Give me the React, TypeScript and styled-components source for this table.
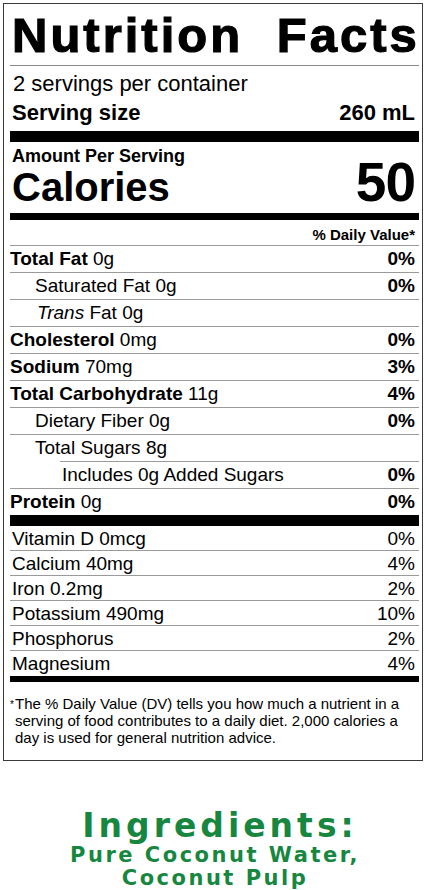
import React from 'react';
import styled, { createGlobalStyle } from 'styled-components';

const Global = createGlobalStyle`
  html, body { margin: 0; padding: 0; background: #fff; }
  body { font-family: "Liberation Sans", Arial, Helvetica, sans-serif; color: #000; }
`;

const Page = styled.div`
  width: 427px;
  padding: 3px 0 0 3px;
  box-sizing: border-box;
`;

const Panel = styled.section`
  width: 420px;
  box-sizing: border-box;
  border: 1px solid #3a3a3a;
  padding: 0 3px 2px 6px;
`;

const Title = styled.h1`
  margin: 0;
  padding: 7px 0 6px 2px;
  font-size: 49px;
  line-height: 48px;
  font-weight: 700;
  letter-spacing: 3px;
  word-spacing: 17px;
  -webkit-text-stroke: 1.2px #000;
  white-space: nowrap;
  border-bottom: 1px solid #8a8a8a;
`;

const Servings = styled.div`
  padding: 5px 0 0 3px;
  font-size: 22px;
  line-height: 26px;
`;

const ServingSize = styled.div`
  display: flex;
  justify-content: space-between;
  margin-top: 3px;
  padding: 0 4px 0 2px;
  font-size: 22px;
  line-height: 26px;
  font-weight: 700;
`;

const Bar = styled.div<{ $h: number; $gap?: number }>`
  height: ${(p) => p.$h}px;
  margin-top: ${(p) => p.$gap ?? 0}px;
  background: #000;
`;

const CaloriesBlock = styled.div`
  display: flex;
  justify-content: space-between;
  align-items: last baseline;
  padding: 3px 4px 0 2px;
`;

const CaloriesLeft = styled.div`
  display: flex;
  flex-direction: column;
`;

const AmountLabel = styled.div`
  font-size: 18px;
  line-height: 22px;
  font-weight: 700;
`;

const CaloriesLabel = styled.div`
  font-size: 40px;
  line-height: 40px;
  font-weight: 700;
`;

const CaloriesValue = styled.div`
  font-size: 55px;
  line-height: 48px;
  font-weight: 700;
  letter-spacing: -1px;
`;

const DailyHeader = styled.div`
  padding: 5px 4px 0 0;
  text-align: right;
  font-size: 15px;
  line-height: 20px;
  font-weight: 700;
  border-bottom: 1px solid #9a9a9a;
`;

const NutrientRow = styled.div<{ $indent: number; $lineInset: number; $last?: boolean }>`
  display: flex;
  justify-content: space-between;
  height: ${(p) => (p.$last ? 26 : 27)}px;
  box-sizing: border-box;
  padding: 0 4px 0 ${(p) => p.$indent}px;
  font-size: 19px;
  line-height: 26px;
  white-space: nowrap;
  background: ${(p) =>
    p.$last ? 'none' : `linear-gradient(#9a9a9a, #9a9a9a) no-repeat right bottom / calc(100% - ${p.$lineInset}px) 1px`};
`;

const Pct = styled.span`
  font-weight: 700;
`;

const VitaminRow = styled.div<{ $last?: boolean }>`
  display: flex;
  justify-content: space-between;
  height: 25px;
  box-sizing: border-box;
  padding: 0 4px 0 2px;
  font-size: 19px;
  line-height: 25px;
  border-bottom: ${(p) => (p.$last ? 'none' : '1px solid #9a9a9a')};
`;

const Footnote = styled.div`
  display: flex;
  padding: 13px 4px 12px 0;
  font-size: 15px;
  line-height: 17px;
`;

const Asterisk = styled.span`
  flex: none;
  width: 5px;
  font-size: 10px;
  line-height: 20px;
`;

const FootText = styled.p`
  margin: 0;
`;

const Ingredients = styled.div`
  margin-top: 46px;
  text-align: center;
  color: #17873f;
  font-family: "DejaVu Sans", Verdana, sans-serif;
  font-weight: 700;
`;

const IngredientsTitle = styled.div`
  padding-left: 10px;
  font-size: 33px;
  line-height: 37px;
  letter-spacing: 4px;
`;

const IngredientsList = styled.div`
  font-size: 21px;
  line-height: 23px;
  letter-spacing: 2.5px;
`;

type Nutrient = {
  name: React.ReactNode;
  amount: string;
  pct?: string;
  indent: number;
  lineInset?: number;
};

const nutrients: Nutrient[] = [
  { name: <b>Total Fat</b>, amount: '0g', pct: '0%', indent: 0 },
  { name: 'Saturated Fat', amount: '0g', pct: '0%', indent: 25 },
  { name: <><i>Trans</i> Fat</>, amount: '0g', indent: 27 },
  { name: <b>Cholesterol</b>, amount: '0mg', pct: '0%', indent: 0 },
  { name: <b>Sodium</b>, amount: '70mg', pct: '3%', indent: 0 },
  { name: <b>Total Carbohydrate</b>, amount: '11g', pct: '4%', indent: 0 },
  { name: 'Dietary Fiber', amount: '0g', pct: '0%', indent: 25 },
  { name: 'Total Sugars', amount: '8g', indent: 25, lineInset: 50 },
  { name: 'Includes 0g Added Sugars', amount: '', pct: '0%', indent: 52 },
  { name: <b>Protein</b>, amount: '0g', pct: '0%', indent: 0 },
];

const vitamins = [
  ['Vitamin D 0mcg', '0%'],
  ['Calcium 40mg', '4%'],
  ['Iron 0.2mg', '2%'],
  ['Potassium 490mg', '10%'],
  ['Phosphorus', '2%'],
  ['Magnesium', '4%'],
];

export default function App() {
  return (
    <Page>
      <Global />
      <Panel>
        <Title>Nutrition Facts</Title>
        <Servings>2 servings per container</Servings>
        <ServingSize>
          <span>Serving size</span>
          <span>260 mL</span>
        </ServingSize>
        <Bar $h={11} $gap={5} />
        <CaloriesBlock>
          <CaloriesLeft>
            <AmountLabel>Amount Per Serving</AmountLabel>
            <CaloriesLabel>Calories</CaloriesLabel>
          </CaloriesLeft>
          <CaloriesValue>50</CaloriesValue>
        </CaloriesBlock>
        <Bar $h={7} $gap={6} />
        <DailyHeader>% Daily Value*</DailyHeader>
        {nutrients.map((n, i) => (
          <NutrientRow
            key={i}
            $indent={n.indent}
            $lineInset={n.lineInset ?? 0}
            $last={i === nutrients.length - 1}
          >
            <span>
              {n.name}
              {n.amount ? ` ${n.amount}` : ''}
            </span>
            {n.pct && <Pct>{n.pct}</Pct>}
          </NutrientRow>
        ))}
        <Bar $h={11} />
        {vitamins.map(([label, pct], i) => (
          <VitaminRow key={label} $last={i === vitamins.length - 1}>
            <span>{label}</span>
            <span>{pct}</span>
          </VitaminRow>
        ))}
        <Bar $h={6} />
        <Footnote>
          <Asterisk>*</Asterisk>
          <FootText>
            The % Daily Value (DV) tells you how much a nutrient in a<br />
            serving of food contributes to a daily diet. 2,000 calories a<br />
            day is used for general nutrition advice.
          </FootText>
        </Footnote>
      </Panel>
      <Ingredients>
        <IngredientsTitle>Ingredients:</IngredientsTitle>
        <IngredientsList>
          Pure Coconut Water,
          <br />
          Coconut Pulp
        </IngredientsList>
      </Ingredients>
    </Page>
  );
}
